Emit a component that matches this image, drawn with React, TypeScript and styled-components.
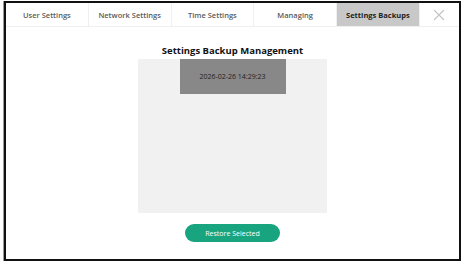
import React, { useState } from 'react';
import styled, { createGlobalStyle } from 'styled-components';

const GlobalStyle = createGlobalStyle`
  html, body {
    margin: 0;
    padding: 0;
    background: #ffffff;
  }
  body {
    font-family: "Open Sans", "Noto Sans", sans-serif;
  }
`;

const tabs = ['User Settings', 'Network Settings', 'Time Settings', 'Managing', 'Settings Backups'];
const backups = ['2026-02-26 14:29:23'];

function App() {
  const [active, setActive] = useState(4);
  const [selected, setSelected] = useState(0);

  return (
    <>
      <GlobalStyle />
      <Frame>
        <TabBar>
          {tabs.map((tab, i) => (
            <Tab key={tab} $active={i === active} onClick={() => setActive(i)}>
              {tab}
            </Tab>
          ))}
          <CloseButton aria-label="close">
            <svg width="12" height="12" viewBox="0 0 12 12">
              <path d="M1 1 L11 11 M11 1 L1 11" stroke="#c4c4c4" strokeWidth="1.1" fill="none" />
            </svg>
          </CloseButton>
        </TabBar>
        <Content>
          <Title>Settings Backup Management</Title>
          <BackupList>
            {backups.map((b, i) => (
              <BackupItem key={b} $selected={i === selected} onClick={() => setSelected(i)}>
                {b}
              </BackupItem>
            ))}
          </BackupList>
          <RestoreButton>Restore Selected</RestoreButton>
        </Content>
      </Frame>
    </>
  );
}

export default App;

const Frame = styled.div`
  box-sizing: border-box;
  margin: 1px 0 0 4px;
  width: 457px;
  height: 260px;
  border: 2px solid #111;
  box-shadow: -1px 0 0 #9a9a9a;
  display: flex;
  flex-direction: column;
  background: #fff;
`;

const TabBar = styled.div`
  display: flex;
  height: 23px;
  border-bottom: 1px solid #efefef;
`;

const Tab = styled.div<{ $active: boolean }>`
  width: 82.75px;
  display: flex;
  align-items: center;
  justify-content: center;
  font-size: 7.5px;
  font-weight: ${({ $active }) => ($active ? 700 : 600)};
  color: ${({ $active }) => ($active ? '#222' : '#5a5a5a')};
  background: ${({ $active }) => ($active ? '#c8c8c8' : '#fff')};
  border-right: 1px solid #f0f0f0;
  box-sizing: border-box;
  cursor: pointer;
`;

const CloseButton = styled.div`
  flex: 1;
  display: flex;
  align-items: center;
  justify-content: center;
`;

const Content = styled.div`
  display: flex;
  flex-direction: column;
  align-items: center;
  padding-top: 17px;
`;

const Title = styled.div`
  font-size: 9.5px;
  font-weight: 700;
  color: #111;
  line-height: 13px;
  margin-bottom: 2px;
`;

const BackupList = styled.div`
  width: 189px;
  height: 154px;
  background: #f1f1f1;
  display: flex;
  flex-direction: column;
  align-items: center;
`;

const BackupItem = styled.div<{ $selected: boolean }>`
  width: 106px;
  height: 35px;
  display: flex;
  align-items: center;
  justify-content: center;
  font-size: 7px;
  color: #222;
  background: ${({ $selected }) => ($selected ? '#888888' : 'transparent')};
  cursor: pointer;
`;

const RestoreButton = styled.button`
  margin-top: 11px;
  width: 95px;
  height: 18px;
  border: none;
  border-radius: 9px;
  background: #17a47f;
  color: #fff;
  font-family: inherit;
  font-size: 7px;
  cursor: pointer;
`;
